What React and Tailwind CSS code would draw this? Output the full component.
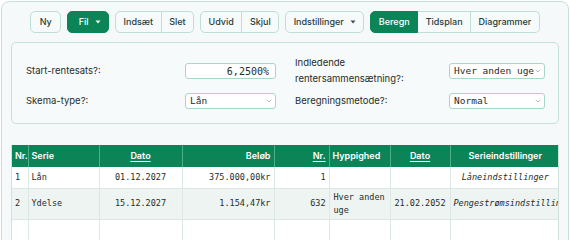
import React from 'react';
import { ChevronDown } from 'lucide-react';

const ui = { fontFamily: 'Inter, "Noto Sans", sans-serif' };
const mono = { fontFamily: '"DejaVu Sans Mono", "Liberation Mono", monospace' };

function Caret({ color }) {
  return (
    <svg width="6" height="4" viewBox="0 0 6 4" className="ml-[6px]">
      <path d="M0.5 0.5 L5.5 0.5 L3 3.5 Z" fill={color} />
    </svg>
  );
}

function Btn({ children, active, first, last, single, caret }) {
  const round = single
    ? 'rounded-[5px]'
    : first
    ? 'rounded-l-[5px]'
    : last
    ? 'rounded-r-[5px] border-l-0'
    : 'border-l-0';
  const color = active
    ? 'bg-[#0b8458] border-[#0b8458] text-white'
    : 'bg-[#f7fafa] border-[#bfdfd3] text-[#24403a]';
  return (
    <button
      className={`flex h-[22px] items-center border px-[7.5px] text-[9px] font-medium ${round} ${color}`}
    >
      {children}
      {caret && <Caret color={active ? '#ffffff' : '#3a4f4a'} />}
    </button>
  );
}

function Toolbar() {
  return (
    <div className="flex justify-center gap-[6px]">
      <Btn single>
        <span className="px-[1px]">Ny</span>
      </Btn>
      <Btn single active caret>
        <span className="pl-[3px]">Fil</span>
      </Btn>
      <div className="flex">
        <Btn first>Indsæt</Btn>
        <Btn last>Slet</Btn>
      </div>
      <div className="flex">
        <Btn first>Udvid</Btn>
        <Btn last>Skjul</Btn>
      </div>
      <Btn single caret>Indstillinger</Btn>
      <div className="flex">
        <Btn first active>Beregn</Btn>
        <Btn>Tidsplan</Btn>
        <Btn last>Diagrammer</Btn>
      </div>
    </div>
  );
}

function Select({ value, w }) {
  return (
    <div
      className={`relative flex h-[16px] items-center overflow-hidden rounded-[3px] border border-[#a9d6c5] bg-white pl-[4px] text-[9.5px] text-[#1f2d2a] ${w}`}
      style={mono}
    >
      <span className="whitespace-nowrap">{value}</span>
      <span className="absolute right-0 top-0 flex h-full items-center pr-[2px]">
        <ChevronDown size={8} strokeWidth={1.5} className="text-[#6b7a76]" />
      </span>
    </div>
  );
}

function Form() {
  return (
    <div className="rounded-[5px] border border-[#c4e2d7] bg-[#f7fafa] pl-[14px] pr-[13px] pt-[13px] pb-[7px]">
      <div className="grid grid-cols-2 gap-x-[19px] text-[9.5px] text-[#1f2d2a]">
        <div>
          <div className="flex h-[30px] items-center justify-between">
            <span>Start-rentesats?:</span>
            <div
              className="flex h-[16px] w-[91px] items-center justify-end rounded-[3px] border border-[#a9d6c5] bg-white pr-[6px] text-[10px]"
              style={mono}
            >
              6,2500%
            </div>
          </div>
          <div className="flex h-[30px] items-center justify-between">
            <span>Skema-type?:</span>
            <Select value="Lån" w="w-[91px]" />
          </div>
        </div>
        <div>
          <div className="flex h-[30px] items-center justify-between">
            <span className="leading-[16px]">
              Indledende
              <br />
              rentersammensætning?:
            </span>
            <Select value="Hver anden uge" w="w-[96px]" />
          </div>
          <div className="flex h-[30px] items-center justify-between">
            <span>Beregningsmetode?:</span>
            <Select value="Normal" w="w-[96px]" />
          </div>
        </div>
      </div>
    </div>
  );
}

const cols = [
  { label: 'Nr.', w: 16, align: 'text-left' },
  { label: 'Serie', w: 71, align: 'text-left' },
  { label: 'Dato', w: 83, align: 'text-center', u: true },
  { label: 'Beløb', w: 92, align: 'text-right' },
  { label: 'Nr.', w: 55, align: 'text-right', u: true },
  { label: 'Hyppighed', w: 61, align: 'text-left' },
  { label: 'Dato', w: 60, align: 'text-center', u: true },
  { label: 'Serieindstillinger', w: 110, align: 'text-center' },
];

const rows = [
  ['1', 'Lån', '01.12.2027', '375.000,00kr', '1', '', '', 'Låneindstillinger'],
  ['2', 'Ydelse', '15.12.2027', '1.154,47kr', '632', 'Hver anden uge', '21.02.2052', 'Pengestrømsindstillinger'],
  ['', '', '', '', '', '', '', ''],
];

function Table() {
  return (
    <div className="overflow-hidden border-x border-[#cfe3dc]">
      <table className="w-[548px] table-fixed border-collapse">
        <colgroup>
          {cols.map((c, i) => (
            <col key={i} style={{ width: c.w }} />
          ))}
        </colgroup>
        <thead>
          <tr className="h-[22px] bg-[#0b8458] text-white">
            {cols.map((c, i) => (
              <th
                key={i}
                className={`border-l border-[#4fae8a] px-[3px] text-[9px] font-semibold first:border-l-0 ${c.align}`}
              >
                <span className={c.u ? 'underline underline-offset-2' : ''}>{c.label}</span>
              </th>
            ))}
          </tr>
        </thead>
        <tbody className="text-[8.5px] text-[#1f2d2a]" style={mono}>
          {rows.map((r, ri) => (
            <tr
              key={ri}
              className={`${ri === 1 ? 'h-[31px] bg-[#eef4f2]' : 'h-[21px] bg-white'} ${ri === 2 ? 'h-[40px]' : ''} border-b border-[#dbe8e3]`}
            >
              {r.map((v, ci) => (
                <td
                  key={ci}
                  className={`overflow-hidden border-l border-[#dbe8e3] first:border-l-0 ${
                    ci === 5 ? 'px-[4px] leading-[13px] text-left' : `whitespace-nowrap px-[3px] ${cols[ci].align}`
                  } ${ci === 7 ? 'italic' : ''}`}
                >
                  {v}
                </td>
              ))}
            </tr>
          ))}
        </tbody>
      </table>
    </div>
  );
}

export default function App() {
  return (
    <div className="h-[240px] overflow-hidden bg-white p-px" style={ui}>
      <div className="h-[300px] rounded-[8px] border border-[#c4e2d7] bg-[#f6f9f9] px-[9px] pt-[9px]">
        <Toolbar />
        <div className="mt-[9px]">
          <Form />
        </div>
        <div className="mt-[21px]">
          <Table />
        </div>
      </div>
    </div>
  );
}
